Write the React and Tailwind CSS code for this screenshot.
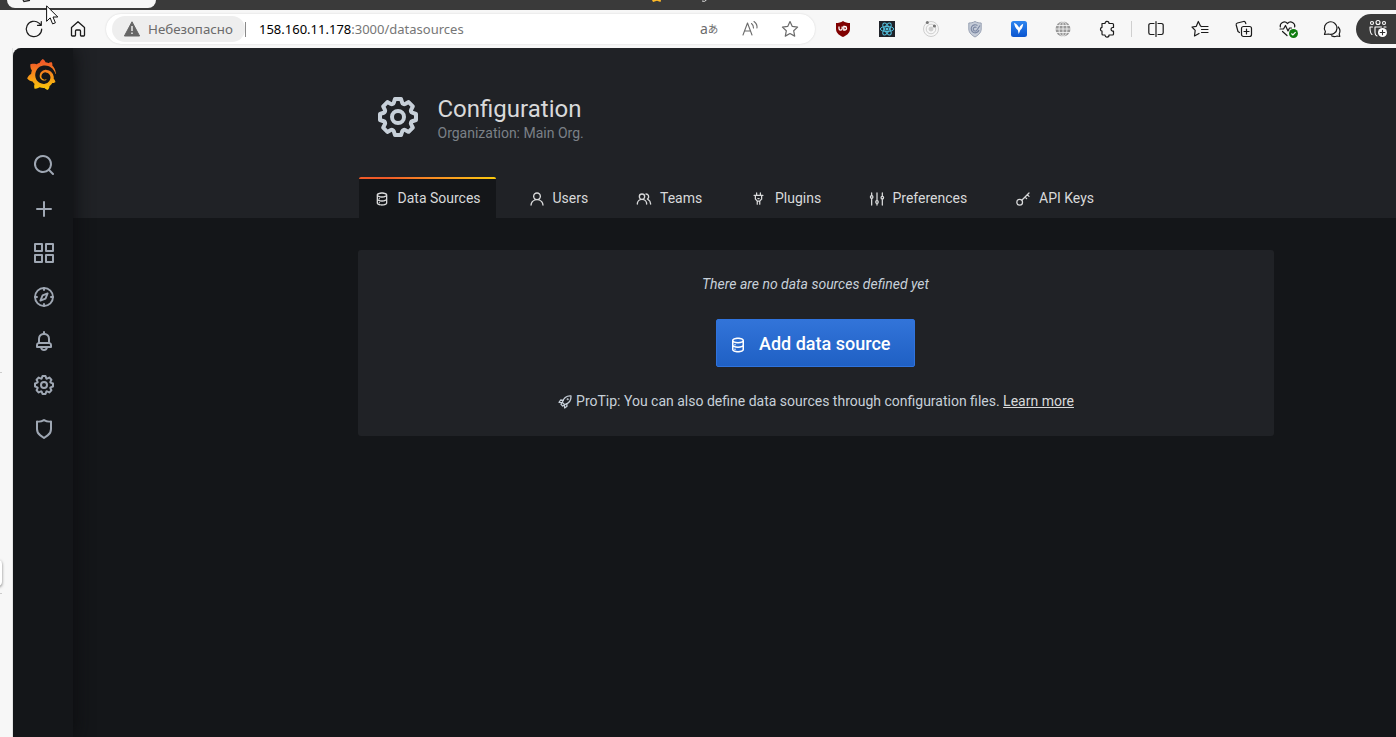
import React from "react";
import { SiGrafana } from "react-icons/si";

const P = {
  search: "M21.71,20.29,18,16.61A9,9,0,1,0,16.61,18l3.68,3.68a1,1,0,0,0,1.42,0A1,1,0,0,0,21.71,20.29ZM11,18a7,7,0,1,1,7-7A7,7,0,0,1,11,18Z",
  plus: "M19,11H13V5a1,1,0,0,0-2,0v6H5a1,1,0,0,0,0,2h6v6a1,1,0,0,0,2,0V13h6a1,1,0,0,0,0-2Z",
  apps: "M10,13H3a1,1,0,0,0-1,1v7a1,1,0,0,0,1,1h7a1,1,0,0,0,1-1V14A1,1,0,0,0,10,13ZM9,20H4V15H9ZM21,2H14a1,1,0,0,0-1,1v7a1,1,0,0,0,1,1h7a1,1,0,0,0,1-1V3A1,1,0,0,0,21,2ZM20,9H15V4h5Zm1,4H14a1,1,0,0,0-1,1v7a1,1,0,0,0,1,1h7a1,1,0,0,0,1-1V14A1,1,0,0,0,21,13Zm-1,7H15V15h5ZM10,2H3A1,1,0,0,0,2,3v7a1,1,0,0,0,1,1h7a1,1,0,0,0,1-1V3A1,1,0,0,0,10,2ZM9,9H4V4H9Z",
  bell: "M18,13.18V10a6,6,0,0,0-5-5.91V3a1,1,0,0,0-2,0V4.09A6,6,0,0,0,6,10v3.18A3,3,0,0,0,4,16v2a1,1,0,0,0,1,1H8.14a4,4,0,0,0,7.72,0H19a1,1,0,0,0,1-1V16A3,3,0,0,0,18,13.18ZM8,10a4,4,0,0,1,8,0v3H8Zm4,10a2,2,0,0,1-1.72-1h3.44A2,2,0,0,1,12,20Zm6-3H6V16a1,1,0,0,1,1-1H17a1,1,0,0,1,1,1Z",
  cog: "M21.32,9.55l-1.89-.63.89-1.78A1,1,0,0,0,20.13,6L18,3.87a1,1,0,0,0-1.15-.19l-1.78.89-.63-1.89A1,1,0,0,0,13.5,2h-3a1,1,0,0,0-.95.68L8.92,4.57,7.14,3.68A1,1,0,0,0,6,3.87L3.87,6a1,1,0,0,0-.19,1.15l.89,1.78-1.89.63A1,1,0,0,0,2,10.5v3a1,1,0,0,0,.68.95l1.89.63-.89,1.78A1,1,0,0,0,3.87,18L6,20.13a1,1,0,0,0,1.15.19l1.78-.89.63,1.89a1,1,0,0,0,.95.68h3a1,1,0,0,0,.95-.68l.63-1.89,1.78.89A1,1,0,0,0,18,20.13L20.13,18a1,1,0,0,0,.19-1.15l-.89-1.78,1.89-.63A1,1,0,0,0,22,13.5v-3A1,1,0,0,0,21.32,9.55ZM20,12.78l-1.2.4A2,2,0,0,0,17.64,16l.57,1.14-1.1,1.1L16,17.64a2,2,0,0,0-2.79,1.16l-.4,1.2H11.22l-.4-1.2A2,2,0,0,0,8,17.64l-1.14.57-1.1-1.1L6.36,16A2,2,0,0,0,5.2,13.18L4,12.78V11.22l1.2-.4A2,2,0,0,0,6.36,8L5.79,6.89l1.1-1.1L8,6.36A2,2,0,0,0,10.82,5.2l.4-1.2h1.56l.4,1.2A2,2,0,0,0,16,6.36l1.14-.57,1.1,1.1L17.64,8a2,2,0,0,0,1.16,2.79l1.2.4ZM12,8a4,4,0,1,0,4,4A4,4,0,0,0,12,8Zm0,6a2,2,0,1,1,2-2A2,2,0,0,1,12,14Z",
  shield: "M19.63,3.65a1,1,0,0,0-.84-.2,8,8,0,0,1-6.22-1.27,1,1,0,0,0-1.14,0A8,8,0,0,1,5.21,3.45a1,1,0,0,0-.84.2A1,1,0,0,0,4,4.43v7.45a9,9,0,0,0,3.77,7.33l3.65,2.6a1,1,0,0,0,1.16,0l3.65-2.6A9,9,0,0,0,20,11.88V4.43A1,1,0,0,0,19.63,3.65ZM18,11.88a7,7,0,0,1-2.93,5.7L12,19.77,8.93,17.58A7,7,0,0,1,6,11.88V5.58a10,10,0,0,0,6-1.39,10,10,0,0,0,6,1.39Z",
  database: "M8,16.5a1,1,0,1,0,1,1A1,1,0,0,0,8,16.5ZM12,2C8,2,4,3.37,4,6V18c0,2.63,4,4,8,4s8-1.37,8-4V6C20,3.37,16,2,12,2Zm6,16c0,.71-2.28,2-6,2s-6-1.29-6-2V14.73A13.16,13.16,0,0,0,12,16a13.16,13.16,0,0,0,6-1.27Zm0-6c0,.71-2.28,2-6,2s-6-1.29-6-2V8.73A13.16,13.16,0,0,0,12,10a13.16,13.16,0,0,0,6-1.27ZM12,8C8.28,8,6,6.71,6,6s2.28-2,6-2,6,1.29,6,2S15.72,8,12,8ZM8,10.5a1,1,0,1,0,1,1A1,1,0,0,0,8,10.5Z",
  user: "M15.71,12.71a6,6,0,1,0-7.42,0,10,10,0,0,0-6.22,8.18,1,1,0,0,0,2,.22,8,8,0,0,1,15.9,0,1,1,0,0,0,1,.89h.11a1,1,0,0,0,.88-1.1A10,10,0,0,0,15.71,12.71ZM12,12a4,4,0,1,1,4-4A4,4,0,0,1,12,12Z",
  users: "M12.3,12.22A4.92,4.92,0,0,0,14,8.5a5,5,0,0,0-10,0,4.92,4.92,0,0,0,1.7,3.72A8,8,0,0,0,1,19.5a1,1,0,0,0,2,0,6,6,0,0,1,12,0,1,1,0,0,0,2,0A8,8,0,0,0,12.3,12.22ZM9,11.5a3,3,0,1,1,3-3A3,3,0,0,1,9,11.5Zm9.74.32A5,5,0,0,0,15,3.5a1,1,0,0,0,0,2,3,3,0,0,1,3,3,3,3,0,0,1-1.5,2.59,1,1,0,0,0-.5.84,1,1,0,0,0,.45.86l.39.26.13.07a7,7,0,0,1,4,6.38,1,1,0,0,0,2,0A9,9,0,0,0,18.74,11.82Z",
  plug: "M19,6H16V3a1,1,0,0,0-2,0V6H10V3A1,1,0,0,0,8,3V6H5A1,1,0,0,0,5,8H6v5a1,1,0,0,0,.29.71L9,16.41V21a1,1,0,0,0,2,0V17h2v4a1,1,0,0,0,2,0V16.41l2.71-2.7A1,1,0,0,0,18,13V8h1a1,1,0,0,0,0-2Zm-3,6.59L13.59,15H10.41L8,12.59V8h8ZM11,13h2a1,1,0,0,0,0-2H11a1,1,0,0,0,0,2Z",
};

const STROKED = {
  compass: (
    <>
      <circle cx="12" cy="12" r="9" />
      <path d="M12 3v2M12 19v2M3 12h2M19 12h2" />
      <path d="M15.6 8.4 10.6 10.3 8.4 15.6 13.5 13.6z" />
    </>
  ),
  sliders: (
    <>
      <path d="M4 3v4M4 11v10M12 3v11.500M12 18.500V21M20 3v5M20 12v9" />
      <circle cx="4" cy="9" r="1.900" />
      <circle cx="12" cy="16.500" r="1.900" />
      <circle cx="20" cy="10" r="1.900" />
    </>
  ),
  key: (
    <>
      <circle cx="7" cy="17" r="4.300" />
      <path d="M10.200 13.800 21 3M15 9l2.500 2.500M18.500 5.500l2.500 2.500" />
    </>
  ),
  rocket: (
    <>
      <path d="M8 12.500C10 6 14 2.500 21 3c.5 7-3 11-9.500 13z" />
      <path d="M9.500 9.500 5.500 9 3 12.500l5 .5M14.500 14.500l.5 4L11.500 21l-.500-5M8 12.500 6 15.500 8.500 18 11.500 16" />
      <circle cx="16" cy="8" r=".6" />
    </>
  ),
};

function Icon({ name, className }) {
  if (P[name])
    return (
      <svg viewBox="0 0 24 24" fill="currentColor" className={"shrink-0 " + className}>
        <path d={P[name]} />
      </svg>
    );
  return (
    <svg viewBox="0 0 24 24" fill="none" stroke="currentColor" strokeWidth="1.900" strokeLinecap="round" strokeLinejoin="round" className={"shrink-0 " + className}>
      {STROKED[name]}
    </svg>
  );
}

function Line({ children, className = "size-5", width = 1.2 }) {
  return (
    <svg viewBox="0 0 20 20" fill="none" stroke="currentColor" strokeWidth={width} strokeLinecap="round" strokeLinejoin="round" className={"shrink-0 " + className}>
      {children}
    </svg>
  );
}

function TabStrip() {
  return (
    <div className="relative h-[10px] shrink-0 bg-[#3a3a3a]">
      <div className="ml-[7px] h-2 w-[149px] rounded-b-lg bg-[#f7f7f7]" />
      <svg viewBox="0 0 12 4" className="absolute left-[21px] top-0 h-1 w-3">
        <path d="M2 0 3 1.500 9 .3" stroke="#222" strokeWidth="1.300" fill="none" />
      </svg>
      <svg viewBox="0 0 10 3" className="absolute left-[652px] top-0 h-[3px] w-[10px]">
        <path d="M0 0h9L8.500 2 5 .8 1 2z" fill="#fdb827" />
      </svg>
      <svg viewBox="0 0 6 3" className="absolute left-[702px] top-0 h-[3px] w-[6px]">
        <path d="M0 1Q2.500 2.300 4.500 0" stroke="#ddd" fill="none" />
      </svg>
    </div>
  );
}

function Extensions() {
  return (
    <div className="flex shrink-0 items-center gap-[24px] pl-[18px]">
      <svg viewBox="0 0 20 20" className="size-5">
        <path d="M10 2C8 3.500 5.500 4 3 4v6c0 4.500 4 6.500 7 8 3-1.500 7-3.500 7-8V4c-2.500 0-5-.5-7-2z" fill="#800000" />
        <path d="M6 7.500v2a1.600 1.600 0 0 0 3.200 0v-2M10.800 7.500h1a1.700 1.700 0 0 1 0 3.500h-1z" stroke="#fff" strokeWidth="1.300" fill="none" />
      </svg>
      <svg viewBox="0 0 20 20" className="size-5">
        <rect x="2" y="2" width="16" height="16" fill="#20232a" />
        <g fill="none" stroke="#53c1de" strokeWidth="1">
          <ellipse cx="10" cy="10" rx="6.700" ry="2.600" />
          <ellipse cx="10" cy="10" rx="6.700" ry="2.600" transform="rotate(60 10 10)" />
          <ellipse cx="10" cy="10" rx="6.700" ry="2.600" transform="rotate(120 10 10)" />
        </g>
        <circle cx="10" cy="10" r="1.500" fill="#53c1de" />
      </svg>
      <svg viewBox="0 0 20 20" className="size-5" fill="none" stroke="#cfcfcf">
        <circle cx="10" cy="10" r="7.500" />
        <circle cx="10" cy="10" r="4.800" />
        <circle cx="10" cy="10" r="2" fill="#cfcfcf" />
        <circle cx="6.300" cy="3.500" r="1.500" fill="#777" stroke="none" />
        <circle cx="13.400" cy="7" r="1.600" fill="#777" stroke="none" />
      </svg>
      <svg viewBox="0 0 20 20" className="size-5">
        <path d="M10 2.500C8 3.700 5.500 4 3.800 4v6c0 4 3.500 6.500 6.200 8 2.700-1.500 6.200-4 6.200-8V4c-1.700 0-4.200-.3-6.200-1.500z" fill="#c5ccd8" stroke="#98a1b3" />
        <path d="M12.500 6.500a4 4 0 1 0 1.500 4.500M11.500 8.500a2 2 0 1 0 .5 2.500L15 6.500" stroke="#7c88a3" strokeWidth="1.200" fill="none" />
      </svg>
      <svg viewBox="0 0 20 20" className="size-5">
        <defs>
          <linearGradient id="blueTile" x1="0" y1="0" x2="0" y2="1">
            <stop stopColor="#2e86f0" />
            <stop offset="1" stopColor="#0b55cf" />
          </linearGradient>
        </defs>
        <rect x="2" y="2" width="16" height="16" rx="2.500" fill="url(#blueTile)" />
        <path d="M5 3.800c2.500 1.200 4.300 2.700 5.200 5 .8-1.500 2-3.200 4-4-.3 3-1.200 5-2.800 6.200L9.700 15l-.9-4C6.700 9.500 5.500 7 5 3.800z" fill="#fff" />
      </svg>
      <svg viewBox="0 0 20 20" className="size-5">
        <circle cx="10" cy="10" r="7.500" fill="#999" />
        <g fill="none" stroke="#f2f2f2" strokeWidth=".9">
          <path d="M10 2v16M2 10h16M3 6.500h14M3 13.500h14" />
          <ellipse cx="10" cy="10" rx="4" ry="7.500" />
        </g>
      </svg>
      <Line className="size-5 text-[#1b1b1b]">
        <path d="M5 4.500h3a2 2 0 0 1 4-.3V4.500h3.500a1 1 0 0 1 1 1V8.500h-1a1.900 1.900 0 0 0 0 3.700h1V15a1 1 0 0 1-1 1H12a2 2 0 0 1-4 .300V16H6a1 1 0 0 1-1-1v-2.800a2 2 0 0 1 0-3.900z" />
      </Line>
    </div>
  );
}

function EdgeActions() {
  return (
    <div className="flex shrink-0 items-center gap-[24px] pl-[14px] text-[#1b1b1b]">
      <Line>
        <path d="M8 4.500H4.500A1.700 1.700 0 0 0 2.800 6.200v7.600A1.700 1.700 0 0 0 4.500 15.500H8M12 4.500h3.500a1.700 1.700 0 0 1 1.700 1.700v7.600a1.700 1.700 0 0 1-1.700 1.700H12M10 2.500v15" />
      </Line>
      <Line>
        <path d="M11.500 7.500 10.500 7 8.300 2.500 6.300 7.300 2 8l3.200 3.300L4.500 17 9 14.500M12 7.500h6M11.500 10.500H18M11.500 13.500H18" />
      </Line>
      <Line>
        <rect x="7.500" y="7.500" width="10" height="10" rx="2" />
        <path d="M12.500 10v5M10 12.500h5M5.500 13.500 4 12.500 2.200 6a1.700 1.700 0 0 1 1.200-2L9.500 2.500a1.700 1.700 0 0 1 2 1.200l.3 1" />
      </Line>
      <svg viewBox="0 0 20 20" className="size-5" fill="none">
        <path d="M2.300 8C1.500 4 6.500 1 9.500 4.500c3-3.500 8-.5 7.200 3.500M4.500 12.500l4.500 4M2 10h3.500L7.500 6.500l2.500 5.500 1.500-3h2" stroke="#1b1b1b" strokeWidth="1.200" strokeLinecap="round" strokeLinejoin="round" />
        <circle cx="15.500" cy="14.500" r="4.500" fill="#107c10" />
        <path d="m13.400 14.500 1.500 1.500 2.700-2.800" stroke="#fff" strokeWidth="1.200" />
      </svg>
      <Line>
        <path d="M2.500 15.500l.9-3A6.300 6.300 0 1 1 6.500 15zM16.200 8c2 2 2.200 4.500 1 7l.6 2.500-2.700-.5a6 6 0 0 1-5.600-.2" />
      </Line>
    </div>
  );
}

function Toolbar() {
  return (
    <div className="flex h-[38px] shrink-0 items-center overflow-hidden bg-[#f7f7f7] font-['Noto_Sans',sans-serif] text-[#1b1b1b]">
      <Line className="ml-6 size-5">
        <path d="M17.700 10A7.700 7.700 0 1 1 15 4.100L17 6M17.300 2.500V6.300H13.500" />
      </Line>
      <Line className="ml-6 size-5" width="1.300">
        <path d="M3.500 8.500 10 2.800l6.500 5.700V16.200a.8.8 0 0 1-.8.8h-2.500a.7.700 0 0 1-.7-.7V12a1 1 0 0 0-1-1h-3a1 1 0 0 0-1 1v4.300a.7.700 0 0 1-.7.700H4.300a.8.8 0 0 1-.8-.8z" />
      </Line>
      <div className="ml-[18px] flex h-[30px] w-[709px] shrink-0 items-center rounded-full bg-white shadow-[0_0_2px_rgba(0,0,0,0.15)]">
        <div className="ml-[6px] flex h-[26px] w-[133px] shrink-0 items-center rounded-full bg-[#eeeeee] pl-3 text-[#6b6b6b]">
          <svg viewBox="0 0 16 16" className="size-4 shrink-0">
            <path d="M8 .8 15.600 15H.4z" fill="#666" stroke="#666" strokeLinejoin="round" />
            <path d="M8 5v5M8 11.500v1.600" stroke="#eee" strokeWidth="1.500" />
          </svg>
          <span className="ml-2 mt-px whitespace-nowrap text-[13.300px]">Небезопасно</span>
        </div>
        <div className="h-[15px] w-px bg-[#8a8a8a]" />
        <div className="ml-[13px] mt-px whitespace-nowrap text-[13px] text-[#767676]">
          <span className="text-black">158.160.11.178</span>:3000/datasources
        </div>
        <div className="ml-auto flex items-center gap-5 pr-[15px] text-[#6b6b6b]">
          <span className="flex h-5 w-5 items-center whitespace-nowrap text-[14px] leading-5">a<span className="font-['Noto_Sans_CJK_JP',sans-serif] text-[10.500px]">あ</span></span>
          <Line className="size-5" width="1.100">
            <path d="M3 16 7.500 4l4.500 12M4.500 12h6M11.500 4.500q2 1.500 2 4.500M14 2.500q3.500 2.500 3 6.500" />
          </Line>
          <Line className="size-5">
            <path d="m10 2.500 2.300 4.900 5.300.7-3.900 3.700 1 5.300L10 14.500l-4.700 2.600 1-5.300L2.400 8.100l5.300-.7z" />
          </Line>
        </div>
      </div>
      <Extensions />
      <div className="ml-[14px] h-4 w-px shrink-0 bg-[#cfcfcf]" />
      <EdgeActions />
      <div className="ml-[14px] flex h-[30px] w-[60px] shrink-0 items-center rounded-l-full bg-[#3a3a3a] pl-3 text-white">
        <Line className="size-5" width="1.100">
          <circle cx="4" cy="4" r="1.500" />
          <circle cx="10" cy="3.500" r="2" />
          <circle cx="16" cy="4" r="1.500" />
          <path d="M4 15.500C2 14.500 2 12 2 8h2.500M7 8h6.500M7 8v5.500c0 2 .5 3 2 3.500M16 8h2" />
          <circle cx="14.500" cy="13.500" r="4.500" fill="#fff" stroke="none" />
          <path d="M14.500 11.200v4.600M12.200 13.500h4.600" stroke="#333" />
        </Line>
      </div>
    </div>
  );
}

const NAV = ["search", "plus", "apps", "compass", "bell", "cog", "shield"];
const TABS = [
  ["database", "Data Sources", "w-[137px]", "size-4", "ml-[7.500px]"],
  ["user", "Users", "w-[91px]", "ml-px size-4", "ml-[7.500px]"],
  ["users", "Teams", "w-[98px]", "size-4", "ml-2"],
  ["plug", "Plugins", "w-[101px]", "size-[15px]", "ml-[9px]"],
  ["sliders", "Preferences", "w-[129px]", "size-4", "ml-[7.500px]"],
  ["key", "API Keys", "w-[112px]", "size-4", "ml-2"],
];

function SideMenu() {
  return (
    <nav className="z-10 flex w-[60px] shrink-0 flex-col items-center bg-[#141619] text-[#9fa7b3] shadow-[0_0_20px_#0b0c0e]">
      <svg className="h-0 w-0">
        <linearGradient id="logoFill" x1="0" y1="0" x2="0" y2="1">
          <stop offset="0.1" stopColor="#f05a28" />
          <stop offset="1" stopColor="#fbca0a" />
        </linearGradient>
      </svg>
      <SiGrafana fill="url(#logoFill)" className="mr-[4px] mt-[11px] size-[31px]" />
      <div className="mt-[63px] flex flex-col gap-5 pl-[2px]">
        {NAV.map((n) => (
          <Icon key={n} name={n} className="size-6" />
        ))}
      </div>
    </nav>
  );
}

export default function App() {
  return (
    <div className="flex h-[737px] w-[1396px] flex-col overflow-hidden bg-[#f7f7f7]">
      <TabStrip />
      <Toolbar />
      <div className="flex min-h-0 flex-1 font-['Roboto',sans-serif] text-[14px] text-[#c7d0d9]">
        <aside className="flex w-[13px] shrink-0 flex-col overflow-hidden border-r border-[#e3e3e3]">
          <div className="mt-[324px] h-px w-[2px] bg-[#cccccc]" />
          <div className="-ml-2 mt-[187px] h-[26px] w-[10px] rounded bg-white shadow-[0_1px_3px_rgba(0,0,0,0.5)]" />
          <div className="mt-[7px] h-px w-[2px] bg-[#cccccc]" />
        </aside>
        <div className="flex min-w-0 flex-1 overflow-hidden rounded-tl-lg">
          <SideMenu />
          <main className="min-w-0 flex-1 bg-[#141619]">
            <header className="flex h-[170px] flex-col bg-[#202226] pl-[286px]">
              <div className="flex pl-[15px] pt-[45px]">
                <Icon name="cog" className="size-12" />
                <div className="pl-[15.500px]">
                  <h1 className="text-[24px] leading-[32px] text-[#d8d9da]">Configuration</h1>
                  <p className="leading-[16px] text-[#7b8087]">Organization: Main Org.</p>
                </div>
              </div>
              <div className="mt-auto flex h-[41px] gap-[17px] text-[#d8d9da]">
                {TABS.map(([icon, label, w, iconClass, labelClass], i) => (
                  <div key={label} className={"flex shrink-0 flex-col whitespace-nowrap " + w + (i === 0 ? " rounded-t-sm bg-[#141619]" : "")}>
                    <div className={i === 0 ? "h-[2px] rounded-t-sm bg-linear-to-r from-[#f05a28] from-20% to-[#fbca0a]" : "h-[2px]"} />
                    <div className="flex items-center pl-[15px] pt-[9px]">
                      <Icon name={icon} className={"mt-px " + iconClass} />
                      <span className={"leading-5 " + labelClass}>{label}</span>
                    </div>
                  </div>
                ))}
              </div>
            </header>
            <section className="ml-[285px] mt-8 flex h-[186px] w-[916px] flex-col items-center rounded-[3px] bg-[#202226] pr-px">
              <p className="mt-6 italic leading-5">There are no data sources defined yet</p>
              <button className="mt-[25px] flex h-12 w-[199px] items-center rounded-[2px] border border-[#2f73dd] bg-linear-to-b from-[#3274d9] to-[#1f60c4] pl-[12px] text-[18px] font-medium text-white">
                <Icon name="database" className="mt-[3px] size-[18px]" />
                <span className="ml-[12px] whitespace-nowrap">Add data source</span>
              </button>
              <p className="mt-6 flex items-center whitespace-nowrap leading-5">
                <Icon name="rocket" className="mr-[3px] mt-px size-4" />
                <span>
                  ProTip: You can also define data sources through configuration files.{" "}
                  <a className="text-[#d8d9da] underline">Learn more</a>
                </span>
              </p>
            </section>
          </main>
        </div>
      </div>
      <svg viewBox="0 0 13 21" className="absolute left-[46px] top-[5px] h-[21px] w-[13px]">
        <path d="M.6.8v15.500l3.600-3.400 2.400 6 2.800-1.100L7 12h4.800z" fill="#fff" stroke="#111" />
      </svg>
    </div>
  );
}
